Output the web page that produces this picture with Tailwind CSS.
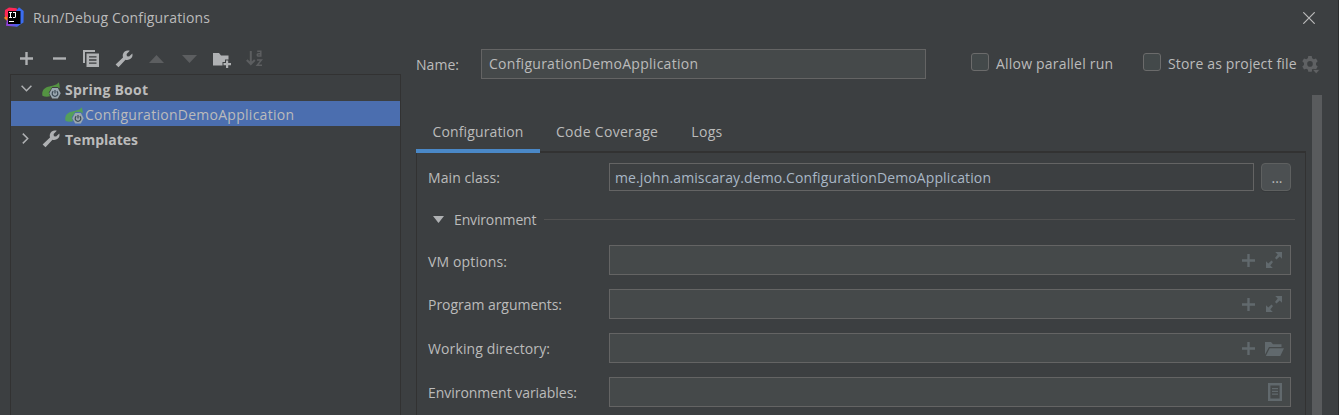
<!DOCTYPE html>
<html lang="en">
<head>
<meta charset="utf-8">
<title>Run/Debug Configurations</title>
<script src="https://cdn.jsdelivr.net/npm/@tailwindcss/browser@4"></script>
</head>
<body class="bg-[#3c3f41]">
<svg class="hidden">
  <symbol id="wrench" viewBox="0 0 18 18"><path d="M.6 14.400 8 7.600C7.300 5.200 7.900 3 9.700 1.500C11.300 .3 13.200 .1 14.800 .8L11.600 3.900L11.900 6.200L14.100 6.500L17.300 3.400C17.900 5.300 17.400 7.300 15.900 8.600C14.400 9.900 12.300 10.300 10.500 9.800L3.500 17.300Z"/></symbol>
  <symbol id="plus" viewBox="0 0 13 13"><path d="M5.300 0H7.700V5.300H13V7.700H7.700V13H5.300V7.700H0V5.300H5.300Z"/></symbol>
  <symbol id="leaf" viewBox="0 0 19 17">
    <path d="M.4 13.800C-.3 9.800 1.300 6.200 6 4.800C10 3.800 14.500 3.600 16.800 .3C17.600 2.600 17.800 4.500 17.600 6.500L15.500 5.100H10.300L6.700 10.600L8 14.300C5 14.900 2.400 14.700 .4 13.800Z"/>
  </symbol>
  <symbol id="badge" viewBox="0 0 19 17">
    <path fill="#9AA7B0" d="M10.200 5.900H15.800L18.700 11.200L15.800 16.600H10.200L7.300 11.200Z"/>
    <path fill="none" stroke="#3c4a55" stroke-width="1.200" d="M11.300 9.300A2.800 2.800 0 1 0 14.700 9.300M13 8V11.600"/>
  </symbol>
  <symbol id="expand" viewBox="0 0 16 16"><path d="M9.200 0H16V6.800L13.700 4.500L10.500 7.400L9 5.900L11.700 2.500ZM6.800 16H0V9.200L2.300 11.500L5.500 8.600L7 10.100L4.300 13.500Z"/></symbol>
</svg>

<div class="flex h-[415px] w-[1339px] flex-col overflow-hidden border-r border-[#2b2d2e] bg-[#3c3f41] font-['Open_Sans','Noto_Sans',sans-serif] text-[14px] leading-5 whitespace-nowrap text-[#bbbbbb]">
  <header class="flex h-9 shrink-0 items-center pl-1">
    <svg class="mb-[2px] h-5 w-5 shrink-0" viewBox="0 0 20 20">
      <defs><linearGradient id="edge" x1="0" x2="1" y1="0" y2="0"><stop offset="0" stop-color="#9b3bd8"/><stop offset="1" stop-color="#2f6bf0"/></linearGradient></defs>
      <path fill="#fc801d" d="M3.500 6.500L0 11L3.500 14.500Z"/>
      <path fill="#fe2857" d="M1 3L5 .5L12.500 1.200L14 5L5 12L.7 8.500Z"/>
      <path fill="#3b6df0" d="M12 4L15 .3L19.700 4L19.500 15.500L13 19.600L5 17L15 9Z"/>
      <path fill="url(#edge)" d="M2.800 13.500L5 11L17 16.500L13 19.700L2 18.800Z"/>
      <path fill="#000" d="M4 4H16.500V17H4Z"/>
      <path fill="#fff" d="M5 5H8V6H7V10H8V11H5V10H6V6H5ZM9 5H12V10L11 11H9V10H11V6H9ZM5 14H10V15H5Z"/>
    </svg>
    <h1 class="ml-[9px] tracking-[.16px]">Run/Debug Configurations</h1>
    <svg class="mt-[-1px] mr-[23px] ml-auto h-3 w-3" viewBox="0 0 12 12"><path d="M.3 .3L11.700 11.700M11.700 .3L.3 11.700" stroke="#bbb" stroke-width="1.200"/></svg>
  </header>

  <div class="flex min-h-0 grow">
    <aside class="ml-2.5 flex w-[391px] shrink-0 flex-col">
      <div class="flex h-[38px] items-center pt-[7px] pl-[9.500px] text-[#afb1b3]">
        <svg class="h-[13px] w-[13px]" fill="currentColor"><use href="#plus"/></svg>
        <svg class="ml-5 h-[13px] w-[13px]" viewBox="0 0 13 13"><path fill="currentColor" d="M0 5.300H13V7.700H0Z"/></svg>
        <svg class="ml-[17.500px] h-[17px] w-4" viewBox="0 0 16 17"><path fill="currentColor" d="M0 0H12V2H2V13H0Z"/><path fill="currentColor" fill-rule="evenodd" d="M3.500 3.500H16V17H3.500ZM6 6.200V7.600H13.500V6.200ZM6 9.300V10.700H13.500V9.300ZM6 12.400V13.800H13.500V12.400Z"/></svg>
        <svg class="ml-4 h-[18px] w-[18px]" fill="currentColor"><use href="#wrench"/></svg>
        <svg class="ml-4 h-2 w-[15px]" viewBox="0 0 15 8"><path fill="#5c5e60" d="M7.500 0L15 8H0Z"/></svg>
        <svg class="ml-[18px] h-2 w-[15px]" viewBox="0 0 15 8"><path fill="#5c5e60" d="M0 0H15L7.500 8Z"/></svg>
        <svg class="mt-[2px] ml-[16px] h-4 w-[18px]" viewBox="0 0 18 16"><path fill="currentColor" d="M0 1H6L8 3.500H15.500V7.500H12V10H9.500V13.500H0Z"/><path fill="currentColor" d="M13 8.500H15.200V11H18V13.200H15.200V16H13V13.200H10.500V11H13Z"/></svg>
        <svg class="ml-[15px] h-[17px] w-[17px]" viewBox="0 0 17 17"><path fill="none" stroke="#5c5e60" stroke-width="2" d="M4.800 1V13.500M.8 10L4.800 14L8.800 10"/><path fill="none" stroke="#5c5e60" stroke-width="1.500" d="M11.200 1.300H14.800V6.800M14.800 3.700H12.500Q11.200 3.700 11.200 4.900Q11.200 6.100 12.600 6.100H14.800M11 10H15.500L11.200 15.200H16"/></svg>
      </div>
      <div class="grow border border-b-0 border-[#323232] pt-[1px]">
        <div class="flex h-[25px] items-center pl-2.5">
          <svg class="h-[7px] w-[11px]" viewBox="0 0 11 7"><path fill="none" stroke="#afb1b3" stroke-width="1.500" d="M.6 .8L5.500 5.700L10.400 .8"/></svg>
          <svg class="mt-[3px] ml-[10px] h-[17px] w-[19px] fill-[#549342]"><use href="#leaf"/><use href="#badge"/></svg>
          <span class="mt-[2px] ml-1 font-bold tracking-[.22px]">Spring Boot</span>
        </div>
        <div class="flex h-[25px] items-center bg-[#4b6eaf] pl-[54px]">
          <svg class="mt-[3px] h-[17px] w-[19px] fill-[#549f5b]"><use href="#leaf"/><use href="#badge"/></svg>
          <span class="mt-[2px] ml-px tracking-[.268px]">ConfigurationDemoApplication</span>
        </div>
        <div class="flex h-[25px] items-center pl-[11px]">
          <svg class="mt-[-1px] h-[11px] w-[7px]" viewBox="0 0 7 11"><path fill="none" stroke="#afb1b3" stroke-width="1.500" d="M.8 .6L5.700 5.500L.8 10.400"/></svg>
          <svg class="ml-[13px] h-[18px] w-[18px] fill-[#afb1b3]"><use href="#wrench"/></svg>
          <span class="mt-[2px] ml-[5px] font-bold">Templates</span>
        </div>
      </div>
    </aside>

    <main class="ml-[15px] flex grow flex-col">
      <div class="flex h-[59px] shrink-0 items-center">
        <label class="mt-[-2px] w-[65px] tracking-[.04px]">Name:</label>
        <div class="mt-[-3px] flex h-[30px] w-[445px] items-center border border-[#646464] bg-[#45494a] pl-[7px] tracking-[.268px]">ConfigurationDemoApplication</div>
        <i class="mt-[-7px] ml-[45px] h-[18px] w-[18px] rounded-[3px] border border-[#6b6b6b] bg-[#43494a]"></i>
        <span class="mt-[-3px] ml-[7px] w-[118px] tracking-[.196px]">Allow parallel run</span>
        <i class="mt-[-7px] ml-[29px] h-[18px] w-[18px] rounded-[3px] border border-[#6b6b6b] bg-[#43494a]"></i>
        <span class="mt-[-3px] ml-[7px] w-[129px] tracking-[.151px]">Store as project file</span>
        <svg class="mt-[-1px] ml-[5px] h-[18px] w-[18px]" viewBox="0 0 18 18"><path fill="#5f6163" fill-rule="evenodd" d="M6.300 0H9.700L10.200 2.300L11.700 3.200L14 2.400L15.700 5.300L14 6.900V8.900L15.700 10.500L14 13.400L11.700 12.700L10.200 13.500L9.700 15.800H6.300L5.800 13.500L4.300 12.700L2 13.400L.3 10.500L2 8.900V6.900L.3 5.300L2 2.400L4.300 3.200L5.800 2.300ZM8 5.100A2.800 2.800 0 1 0 8 10.700A2.800 2.800 0 1 0 8 5.100Z"/><path fill="#5f6163" stroke="#3c3f41" stroke-width=".7" d="M10.300 13.500H18L14.200 17.800Z"/></svg>
      </div>

      <div class="flex min-h-0 grow">
        <section class="flex w-[890px] flex-col">
          <nav class="flex h-[58px] shrink-0 items-end">
            <div class="flex h-[41px] w-[124px] justify-center border-b-4 border-[#4a88c7] pt-[10px] tracking-[.142px]">Configuration</div>
            <div class="flex h-[41px] grow border-b-2 border-[#323232] pt-[10px]">
              <span class="ml-4 tracking-[.302px]">Code Coverage</span>
              <span class="ml-[33px] tracking-[.328px]">Logs</span>
            </div>
          </nav>
          <div class="flex grow flex-col border-x border-[#323232] pt-[10px] pr-[14px] pl-[11px]">
            <div class="flex h-7 items-center">
              <span class="w-[181px] pt-[2px] tracking-[.083px]">Main class:</span>
              <div class="flex h-7 w-[645px] items-center border border-[#646464] pt-[2px] pl-[5px] tracking-[.116px] text-[#a9b7c6]">me.john.amiscaray.demo.ConfigurationDemoApplication</div>
              <button class="ml-[7px] flex h-7 w-[30px] items-center justify-center rounded-[4px] border border-[#5e6060] bg-[#4c5052] pt-[2px] pl-[2px] shadow-[0_1px_0_#36393b]">...</button>
            </div>
            <div class="mt-[18px] mr-[-4px] flex h-5 items-center pl-[5px]">
              <svg class="h-[7px] w-[11px]" viewBox="0 0 11 7"><path fill="#afb1b3" d="M0 0H11L5.500 7Z"/></svg>
              <span class="ml-[10px] w-[83px] pt-px tracking-[-.15px]">Environment</span>
              <div class="ml-[7px] h-px grow bg-[#515151]"></div>
            </div>
            <div class="mt-4 grid auto-rows-[30px] grid-cols-[181px_682px] items-center gap-y-[14px]">
              <span class="pt-[3px] tracking-[.155px]">VM options:</span>
              <div class="flex h-[30px] items-center border border-[#646464] bg-[#45494a] pl-[632px]">
                <svg class="h-[13px] w-[13px] fill-[#61696d]"><use href="#plus"/></svg>
                <svg class="ml-[11px] h-4 w-4 fill-[#61696d]"><use href="#expand"/></svg>
              </div>
              <span class="pt-[2px] tracking-[-.04px]">Program arguments:</span>
              <div class="flex h-[30px] items-center border border-[#646464] bg-[#45494a] pl-[632px]">
                <svg class="h-[13px] w-[13px] fill-[#61696d]"><use href="#plus"/></svg>
                <svg class="ml-[11px] h-4 w-4 fill-[#61696d]"><use href="#expand"/></svg>
              </div>
              <span class="pt-[2px] tracking-[.118px]">Working directory:</span>
              <div class="flex h-[30px] items-center border border-[#646464] bg-[#45494a] pl-[632px]">
                <svg class="h-[13px] w-[13px] fill-[#61696d]"><use href="#plus"/></svg>
                <svg class="mt-px ml-[10px] h-[14px] w-[19px] fill-[#61696d]" viewBox="0 0 19 14"><path d="M0 0H6L8 2.300H16.500V5H4L0 12.500Z"/><path d="M4.700 6.200H19L15.300 14H.8Z"/></svg>
              </div>
              <span class="pt-[2px] tracking-[-.037px]">Environment variables:</span>
              <div class="flex h-[30px] items-center border border-[#646464] bg-[#45494a] pl-[658px]">
                <svg class="h-[18px] w-[14px]" viewBox="0 0 14 18"><path fill="none" stroke="#61696d" stroke-width="2.400" d="M1.200 1.200H12.800V16.800H1.200Z"/><path stroke="#61696d" stroke-width="1.200" d="M4 5.600H10M4 8.400H10M4 11.200H10"/></svg>
              </div>
            </div>
          </div>
        </section>
        <div class="ml-1.5 w-2.5 bg-[#595b5d]"></div>
      </div>
    </main>
  </div>
</div>
</body>
</html>
